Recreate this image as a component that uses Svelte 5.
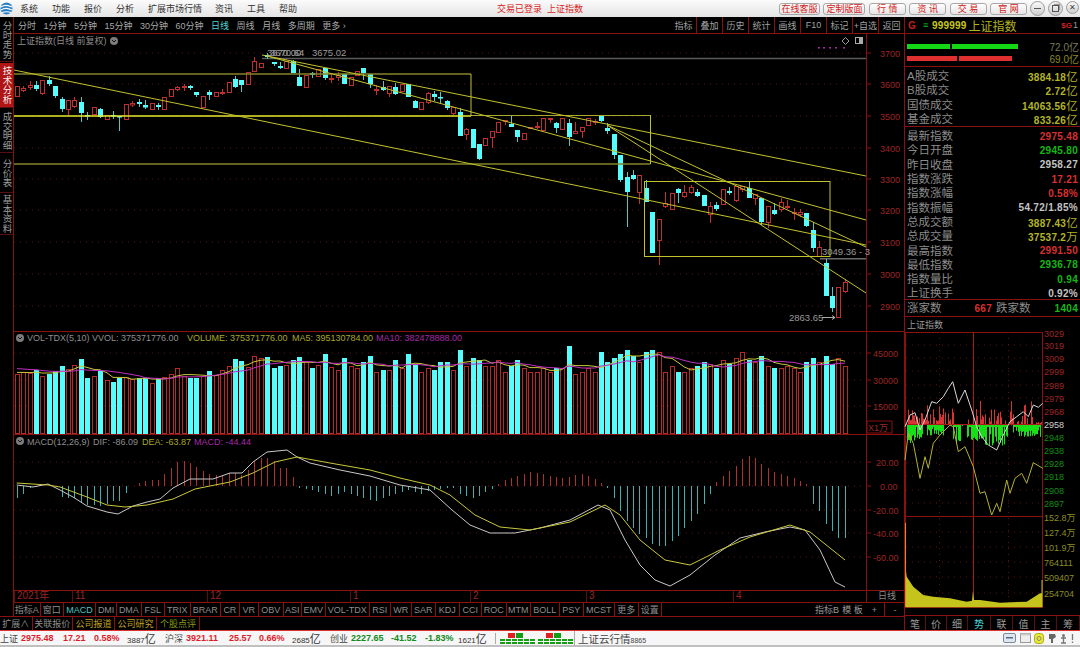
<script>
  const menu = [['系统',18],['功能',18],['报价',18],['分析',18],['扩展市场行情',53],['资讯',18],['工具',18],['帮助',18]];
  const webBtns = [['在线客服',41],['定制版面',42],['行 情',37],['资 讯',37],['交 易',37],['官 网',37]];
  const periods = ['分时','1分钟','5分钟','15分钟','30分钟','60分钟','日线','周线','月线','多周期','更多 ›'];
  const tools = ['指标','叠加','历史','统计','画线','F10','标记','+自选','返回'];
  const railTabs = [['分时走势',44,false],['技术分析',45,true],['成交明细',44,false],['分价表',39,false],['基本资料',41,false]];

  // [isRed, bodyTop, bodyBottom, high, low] in page pixels
  const candles = [
    [1,86,96,86,96],[1,88,90,86,92],[1,85,87,81,90],[0,85,89,81,91],[1,80,93,80,95],[0,80,84,76,86],[0,86,96,86,98],[0,99,109,97,112],[1,100,109,100,115],[1,100,106,97,108],
    [0,102,113,97,122],[0,115,116,112,120],[1,107,114,107,114],[0,109,117,108,118],[1,115,119,115,119],[0,115,116,111,119],[0,116,117,116,131],[1,104,119,104,119],[1,103,104.5,101,107],[0,102,104,99,107],
    [0,105,107.5,100,109],[1,103,109,103,109],[0,105,107,103,110],[1,97,109,97,109],[1,89,96,89,96],[1,87,89,86,91],[1,86,87,84,91],[0,86,88,85,90],[0,92,95,92,97],[1,96,107,96,107],
    [0,92,95,90,100],[1,92,96,92,96],[1,92,92.5,89,95],[1,82,92,82,92],[0,79,87,76,88],[0,80,85,80,92],[1,72,84,72,84],[1,61,71,57,71],[1,63,67,63,67],[0,55,57,53,59],
    [0,62,64,62,66],[0,66,68,62,69],[1,61,68,61,68],[0,61,73,60,73],[0,77,86,69,86],[1,75,87,75,87],[0,73,75,72,78],[1,69,76,69,76],[0,68,78,68,80],[1,78,79,74,83],
    [1,75,77,72,81],[0,74,84,74,84],[1,77,85,77,85],[1,71,75,71,75],[0,68,73,68,80],[0,74,84,74,88],[1,89,90,85,95],[0,87,90,81,91],[1,86,93,86,97],[0,87,94,83,95],
    [1,84,91,84,91],[0,84,97,84,97],[0,101,108,100,108],[1,102,109,102,109],[1,93,102,92,104],[0,94,97,91,101],[0,97,98,92,103],[0,101,108,100,110],[1,107,113,107,115],[0,112,136,108,136],
    [1,129,134,128,140],[0,129,148,129,148],[0,144,159,144,160],[1,138,145,138,145],[1,131,137,131,148],[1,122,132,122,132],[1,120,121,120,125],[0,124,127,115,127],[0,130,137,130,142],[1,133,139,133,139],
    [1,127,128,127,129],[1,126,127,122,129],[1,118,130,118,130],[1,118,119,118,123],[0,123,128,122,133],[1,118,129,118,129],[0,123,137,119,146],[1,131,133,122,133],[1,127,131,127,138],[1,118,125,118,125],
    [1,121,122,119,125],[0,116,121,115,122],[0,128,131,123,134],[0,134,155,134,159],[0,155,180,155,182],[0,177,192,172,227],[0,175,179,170,180],[1,175,192,175,204],[0,188,202,180,202],[0,212,253,212,253],
    [1,219,240,219,265],[1,203,206,192,208],[1,193,209,193,209],[0,189,193,188,203],[1,192,196,185,198],[1,187,192,185,194],[0,192,196,189,197],[0,195,206,195,206],[1,206,214,202,223],[0,205,209,202,211],
    [1,189,204,189,204],[0,191,193,187,195],[1,186,200,186,202],[1,186,189,186,192],[0,188,198,182,198],[1,194,198,194,205],[0,198,222,198,225],[1,206,222,206,228],[0,210,214,203,215],[1,202,209,198,212],
    [1,206,207,200,209],[1,212,213,208,220],[1,212,214,209,217],[0,213,226,213,227],[0,230,248,222,252],[1,247,256,241,256],[0,263,296,259,296],[0,296,308,287,312],[1,287,317,287,317],[1,282,291,279,293]
  ];
  const cx = i => Math.round(16.7 + 6.42 * i);

  const volTops = [374,372,373,370,376,374,371,366,369,365,359,378,376,371,380,382,378,377,379,378,378,383,378,377,374,368,376,378,378,376,371,375,370,366,359,361,367,356,358,357,368,366,365,360,357,
    362,368,365,354,367,370,358,366,368,362,356,372,370,370,360,368,354,364,372,368,370,362,362,370,350,366,358,360,366,366,360,372,366,360,368,372,372,368,372,368,368,346,374,372,368,372,352,362,358,354,350,356,362,352,350,352,372,366,372,372,368,366,362,364,368,360,364,358,352,360,362,356,366,368,368,366,368,372,362,358,362,356,364,358,366];
  const maPath = n => volTops.map((_, i) => {
    let s = 0, k = 0;
    for (let j = Math.max(0, i - n + 1); j <= i; j++) { s += volTops[j]; k++; }
    const pad = n - k;
    return `${i ? 'L' : 'M'}${cx(i)} ${((s + pad * (n === 10 ? 368 : 372)) / n).toFixed(1)}`;
  }).join('');

  const hist = [-12,-8,-2,-1,0,0,0,-11,-12,-12,-17,-19,-19,-20,-18,-15,-15,-7,0,3,5,6,6,12,18,24,25,23,19,15,12,11,10,13,13,11,16,25,28,28,25,18,18,9,-2,
    -3,-4,-6,-8,-10,-8,-6,-8,-10,-12,-14,-15,-12,-10,-8,-6,-4,-6,-8,-5,-4,-3,-2,-2,-8,-10,-12,-10,-6,-3,2,6,8,10,12,14,13,12,10,9,8,9,11,12,10,7,3,-2,
    -12,-25,-35,-42,-48,-52,-58,-60,-60,-55,-50,-42,-35,-28,-18,-8,4,10,15,20,27,30,28,22,18,14,12,10,8,5,2,-18,-25,-38,-45,-52,-52];
  const dif = '16.7,485 33,487 48,484 60,490 73,497 87,506 107,512 118,514 133,506 147,502 160,499 173,488 190,479 213,479 230,473 242,473 253,462 267,452 287,450 297,457 310,463 340,470 370,476 400,485 430,490 452,510 470,525 490,533 515,533 540,528 570,520 598,505 610,510 625,540 640,565 655,580 670,586 690,575 715,555 740,538 765,532 790,527 805,530 820,550 835,582 845,587';
  const dea = '16.7,483 48,485 60,487 87,497 107,505 125,507 147,505 173,499 195,489 230,482 253,473 275,462 297,457 330,463 370,470 400,478 430,485 450,495 475,515 500,527 530,530 570,522 605,505 620,515 640,540 665,560 690,565 720,550 750,537 790,525 810,532 845,560';

  const priceAxis = [[3700,53],[3600,84],[3500,116],[3400,148],[3300,179],[3200,210],[3100,242],[3000,274],[2900,306]];
  const volAxis = [[45000,353],[30000,380],[15000,406]];
  const macdAxis = [['20.00',462],['0.00',486],['-20.00',510],['-40.00',533],['-60.00',557]];
  const diagonals = [[14,70,866,245],[262,55,866,176],[267,56,866,220],[607,125,866,247],[607,125,866,293]];

  const dates = [['2021年',58],['11',135],['12',143],['1',120],['2',116],['3',147],['4',133]];
  const indicators = [['指标A',26.7],['窗口',23],['MACD',32.7,true],['DMI',20.5],['DMA',25],['FSL',23],['TRIX',26],['BRAR',30],['CR',19],['VR',19],['OBV',25],['ASI',18],['EMV',24],['VOL-TDX',44],['RSI',20.7],['WR',21.3],['SAR',24],['KDJ',24],['CCI',22],['ROC',25],['MTM',24],['BOLL',29],['PSY',24],['MCST',31],['更多',23.7],['设置',23.3]];
  const extTabs = [['扩展∧',32.5,''],['关联报价',40.5,''],['公司报道',42,'y'],['公司研究',42,'y'],['个股点评',43,'o']];

  const quotes = [['A股成交','3884.18','亿'],['B股成交','2.72','亿'],['国债成交','14063.56','亿'],['基金成交','833.26','亿']];
  const stats = [['最新指数','2975.48','r'],['今日开盘','2945.80','g'],['昨日收盘','2958.27','w'],['指数涨跌','17.21','r'],['指数涨幅','0.58%','r'],['指数振幅','54.72/1.85%','w'],['总成交额','3887.43','o','亿'],['总成交量','37537.2','o','万'],['最高指数','2991.50','r'],['最低指数','2936.78','g'],['指数量比','0.94','g'],['上证换手','0.92%','w']];
  const sideTabs = [['笔',21],['价',21],['细',21],['势',23],['联',22],['值',22],['主',22],['筹',23]];

  const intraAxis = [['3029',333,'r'],['3019',345,'r'],['3009',358,'r'],['2999',371,'r'],['2989',385,'r'],['2979',398,'r'],['2968',411,'r'],['2958',424,'w'],['2948',437,'g'],['2938',450,'g'],['2928',463,'g'],['2918',476,'g'],['2908',490,'g'],['2897',503,'g'],['152.8万',517,'o'],['127.4万',532,'o'],['101.9万',547,'o'],['764111',562,'o'],['509407',577,'o'],['254704',593,'o']];
  const z = s => s.trim().split(/\s+/).map(p => { const [a, b] = p.split(','); return `${(900 + a / 3).toFixed(1)},${(320 + b / 3).toFixed(1)}`; }).join(' ');
  const whiteLine = z('15,320 30,285 45,278 60,330 75,300 95,245 110,250 130,230 145,205 158,185 175,250 195,210 215,270 230,320 245,350 265,375 290,390 310,345 330,305 350,290 370,275 385,290 400,255 415,262 428,250');
  const yellowLine = z('15,420 25,340 40,370 60,475 75,410 85,445 100,370 120,345 150,315 160,320 175,395 195,380 220,440 240,520 255,515 275,585 290,550 300,575 320,480 330,520 345,475 365,460 380,490 400,428 428,445');
  const volArea = z('17,745 20,770 40,800 70,825 100,830 150,835 200,845 216,842 219,812 222,840 240,840 300,848 380,845 420,820 426,820 426,862 17,862');

  let seed = 7;
  const rnd = () => { seed = (seed * 16807) % 2147483647; return seed / 2147483647; };
  // Money-flow bars: zones of buying (red) and selling (green) over the session.
  const greenZones = [[907,922,7,20],[927,943,5,12],[953,960,15,20],[967,982,10,17],[983,1007,10,22],[1013,1040,5,14]];
  const redEnv = x => {
    if (x < 955) return rnd() < .3 ? 0 : 3 + 20 * rnd() * rnd();
    if (x < 975) return rnd() < .85 ? 0 : 4 + 6 * rnd();
    if (x < 1036) return rnd() < .55 ? 0 : 2 + 28 * rnd() * rnd();
    return 3 * rnd();
  };
  const greenEnv = x => {
    const zone = greenZones.find(([a, b]) => x >= a && x <= b);
    if (!zone) return rnd() < .5 ? 0 : 2 * rnd();
    return rnd() < .15 ? 3 : zone[2] + (zone[3] - zone[2]) * rnd();
  };
  const flowBars = [];
  for (let x = 906; x < 1042; x++) {
    flowBars.push({ x, up: redEnv(x), down: greenEnv(x) });
  }

  const status = [
    ['上证','n',21],['2975.48','r',42],['17.21','r',31],['0.58%','r',33],['3887','k',38,'亿'],
    ['沪深','n',21],['3921.11','r',43],['25.57','r',30],['0.66%','r',33],['2685','k',38,'亿'],
    ['创业','n',21],['2227.65','g',40],['-41.52','g',34],['-1.83%','g',33],['1621','k',37,'亿']
  ];
  const dashes = Array.from({ length: 6 });
</script>

<div class="app">
  <header class="titlebar">
    <svg class="logo" width="13" height="13" viewBox="0 0 13 13">
      <circle cx="6.5" cy="6.5" r="6" fill="#2a7fc4"/>
      <path d="M1 5c3-2 7-2 11 0M1 8c3-2 7-2 11 0M2 10.5c3-1 6-1 9 0" stroke="#fff" stroke-width="1.1" fill="none"/>
    </svg>
    <nav class="menu">
      {#each menu as [m, w]}<span style="width:{w}px">{m}</span>{/each}
    </nav>
    <div class="login">交易已登录&nbsp;&nbsp;上证指数</div>
    <div class="webbtns">
      {#each webBtns as [b, w]}<span style="width:{w}px">{b}</span>{/each}
    </div>
    <div class="winbtns">
      <span class="wb"><i class="min"></i></span>
      <span class="wb"><i class="rest"></i></span>
      <span class="wb x">✕</span>
    </div>
  </header>

  <div class="workspace">
    <div class="leftarea">
      <div class="upper">
        <aside class="rail">
          {#each railTabs as [t, h, on]}
            <div class="railtab" class:on style="height:{h}px">{t}</div>
          {/each}
        </aside>
        <main class="main">
          <div class="toolbar">
            <div class="periods">
              {#each periods as p}<span class:active={p === '日线'}>{p}</span>{/each}
            </div>
            <div class="tools">
              {#each tools as t}<span>{t}</span>{/each}
            </div>
          </div>

          <svg class="pane" width="891" height="297" viewBox="14 34 891 297">
            {#each priceAxis as [v, y]}
              <line x1="14" x2="866" y1={y} y2={y} class="dots"/>
              <line x1="866" x2="871" y1={y} y2={y} class="axisline"/>
              <text x="880" y={y + 3.5} class="t axis">{v}</text>
            {/each}
            <line x1="866.5" x2="866.5" y1="34" y2="331" class="axisline"/>
            <line x1="262" x2="866" y1="58.5" y2="58.5" stroke="#5a5a5a" stroke-width="1.5"/>
            <line x1="820" x2="866" y1="258.7" y2="258.7" stroke="#6a6a6a" stroke-width="1.5"/>

            {#each candles as [red, top, bot, hi, lo], i}
              <line x1={cx(i) + .5} x2={cx(i) + .5} y1={hi} y2={lo} stroke={red ? '#c03030' : '#4fc8c8'}/>
              {#if red}
                <rect x={cx(i) - 1.5} y={top + .5} width="4" height={Math.max(bot - top, 1)} fill="#000" stroke="#c03030"/>
              {:else}
                <rect x={cx(i) - 2} y={top} width="5" height={Math.max(bot - top, 1.5)} fill="#56fdfd"/>
              {/if}
            {/each}

            <line x1="14" x2="471" y1="74" y2="74" stroke="#85852a" stroke-width="1.6"/>
            <line x1="14" x2="471" y1="116" y2="116" stroke="#e8e82c" stroke-width="1.6"/>
            <line x1="471" x2="650.5" y1="115.5" y2="115.5" stroke="#a8a82c" stroke-width="1.2"/>
            <line x1="14" x2="650.5" y1="164" y2="164" stroke="#85852a" stroke-width="1.4"/>
            <line x1="471" x2="471" y1="74" y2="116" class="draw"/>
            <line x1="650.5" x2="650.5" y1="115" y2="164" class="draw"/>
            <rect x="644.5" y="181.5" width="185.5" height="75" class="draw" fill="none"/>
            {#each diagonals as [x1, y1, x2, y2]}
              <line {x1} {y1} {x2} {y2} class="draw"/>
            {/each}

            <text x="17" y="44" class="t head">上证指数(日线 前复权)</text>
            <circle cx="114" cy="41" r="4" fill="#7c7c7c"/>
            <path d="M112 40l2 2 2-2" stroke="#111" fill="none"/>

            <text x="267" y="56" class="t note">3670.00</text>
            <text x="270" y="56" class="t note">3670.64</text>
            <text x="312" y="56" class="t note">3675.02</text>
            <text x="822" y="255" class="t note">3049.36 - 3</text>
            <text x="789" y="321" class="t note">2863.65</text>
            <path d="M822 317.5h13m-3-2l3 2-3 2" stroke="#aaa" fill="none"/>

            {#each [818,823,829,835,843] as x}<rect x={x} y="47" width="2" height="1.6" fill="#a02aa0"/>{/each}
            <path d="M845.5 37.5l3.5 3.5-3.5 3.5-3.5-3.5z" stroke="#999" fill="none"/>
            <rect x="855.5" y="37.5" width="7" height="6" stroke="#aaa" fill="none"/>
            <rect x="859" y="38" width="3" height="5" fill="#aaa"/>
          </svg>

          <svg class="pane" width="891" height="103" viewBox="14 331 891 103">
            <line x1="14" x2="905" y1="331.5" y2="331.5" class="axisline"/>
            <line x1="14" x2="866" y1="353" y2="353" class="dots"/>
            <line x1="14" x2="866" y1="380" y2="380" class="dots"/>
            <line x1="14" x2="866" y1="406" y2="406" class="dots"/>
            <line x1="866.5" x2="866.5" y1="331" y2="434" class="axisline"/>
            {#each volAxis as [v, y]}
              <line x1="866" x2="871" y1={y} y2={y} class="axisline"/>
              <text x="873" y={y + 3.5} class="t axis">{v}</text>
            {/each}
            <text x="868" y="431" class="t axis">X1万</text>
            <rect x="867" y="421" width="25" height="12" class="axisline" fill="none"/>
            {#each volTops as top, i}
              {#if candles[i][0]}
                <rect x={cx(i) - 1.5} y={top + .5} width="4" height={433 - top} fill="#000" stroke="#b82a2a"/>
              {:else}
                <rect x={cx(i) - 2} y={top} width="5" height={434 - top} fill="#56fdfd"/>
              {/if}
            {/each}
            <path d={maPath(5)} stroke="#c8c83a" fill="none"/>
            <path d={maPath(10)} stroke="#c030c0" fill="none"/>
            <circle cx="20" cy="338" r="4" fill="#7c7c7c"/>
            <path d="M18 337l2 2 2-2" stroke="#111" fill="none"/>
            <text x="27" y="341" class="t gray">VOL-TDX(5,10)</text>
            <text x="92" y="341" class="t gray">VVOL: 375371776.00</text>
            <text x="187" y="341" class="t olive">VOLUME: 375371776.00</text>
            <text x="292" y="341" class="t olive">MA5: 395130784.00</text>
            <text x="376" y="341" class="t mag">MA10: 382478888.00</text>
          </svg>

          <svg class="pane" width="891" height="156" viewBox="14 434 891 156">
            <line x1="14" x2="905" y1="434.5" y2="434.5" class="axisline"/>
            {#each macdAxis as [v, y]}
              <line x1="14" x2="866" y1={y} y2={y} class="dots"/>
              <line x1="866" x2="871" y1={y} y2={y} class="axisline"/>
              <text x={v === '0.00' ? 880 : v === '20.00' ? 876 : 873} y={y + 3.5} class="t axis">{v}</text>
            {/each}
            <line x1="866.5" x2="866.5" y1="434" y2="590" class="axisline"/>
            {#each hist as h, i}
              {#if h}
                <line x1={cx(i) + .5} x2={cx(i) + .5} y1="486" y2={486 - h} stroke={h > 0 ? '#b03030' : '#3fb0b0'}/>
              {/if}
            {/each}
            <polyline points={dif} fill="none" stroke="#c8c8c8"/>
            <polyline points={dea} fill="none" stroke="#c8c83a"/>
            <circle cx="20" cy="441" r="4" fill="#7c7c7c"/>
            <path d="M18 440l2 2 2-2" stroke="#111" fill="none"/>
            <text x="27" y="444.5" class="t gray">MACD(12,26,9)</text>
            <text x="93" y="444.5" class="t gray">DIF: -86.09</text>
            <text x="142" y="444.5" class="t olive">DEA: -63.87</text>
            <text x="194" y="444.5" class="t mag">MACD: -44.44</text>
          </svg>

          <div class="dates">
            {#each dates as [d, w]}<span style="width:{w}px">{d}</span>{/each}
            <span class="period">日线</span>
          </div>
          <div class="indicators">
            {#each indicators as [t, w, on]}<span class:on style="width:{w}px">{t}</span>{/each}
            <b class="fill"></b>
            <span class="plain" style="width:26px">指标B</span>
            <span class="plain" style="width:25px">模 板</span>
            <span style="width:20px">+</span>
            <span class="last" style="width:20px">-</span>
          </div>
        </main>
      </div>
      <div class="ext">
        {#each extTabs as [t, w, c]}<span class={c} style="width:{w}px">{t}</span>{/each}
      </div>
    </div>

    <aside class="side">
      <div class="code">
        <span class="g">G</span><span class="eq">≡</span><b>999999</b><span class="name">上证指数</span>
        <span class="sg"><em>$G</em>1</span>
      </div>
      <div class="bars">
        <div class="barrow">
          <div class="track"><i class="gr" style="width:43px"></i><i class="gr" style="width:66px"></i></div>
          <span class="amt gray2">72.0亿</span>
        </div>
        <div class="barrow">
          <div class="track"><i class="rd" style="width:50px"></i><i class="rd" style="width:53px"></i></div>
          <span class="amt olive2">69.0亿</span>
        </div>
      </div>
      <div class="sec">
        {#each quotes as [l, v, u]}
          <div class="row"><span class="lab">{l}</span><span class="val o">{v}<small>{u}</small></span></div>
        {/each}
      </div>
      <div class="sec tall">
        {#each stats as [l, v, c, u]}
          <div class="row"><span class="lab">{l}</span><span class="val {c}">{v}{#if u}<small>{u}</small>{/if}</span></div>
        {/each}
      </div>
      <div class="updown">
        <span class="lab">涨家数</span><span class="val r">667</span>
        <span class="lab two">跌家数</span><span class="val g end">1404</span>
      </div>
      <div class="sname">上证指数</div>
      <svg class="intra" width="175" height="283" viewBox="905 332 175 283">
        <line x1="905" x2="1043" y1="332.5" y2="332.5" class="axisline"/>
        <line x1="905.5" x2="905.5" y1="332" y2="607" class="axisline"/>
        <line x1="1042.5" x2="1042.5" y1="332" y2="607" class="axisline"/>
        <line x1="973.5" x2="973.5" y1="332" y2="607" stroke="#a81818"/>
        {#each [345,358,371,385,398,411,437,450,463,476,490,503] as y}
          <line x1="906" x2="1042" y1={y} y2={y} class="dots"/>
        {/each}
        {#each [532,547,562,577,593] as y}
          <line x1="906" x2="1042" y1={y} y2={y} class="dots"/>
        {/each}
        <line x1="939.5" x2="939.5" y1="332" y2="607" class="dots"/>
        <line x1="1008.5" x2="1008.5" y1="332" y2="607" class="dots"/>
        <line x1="905" x2="1043" y1="516.5" y2="516.5" class="axisline"/>
        <line x1="905" x2="1043" y1="607.5" y2="607.5" class="axisline"/>
        {#each flowBars as b}
          {#if b.up}<line x1={b.x + .5} x2={b.x + .5} y1="424" y2={424 - b.up} stroke="#d83434"/>{/if}
          {#if b.down}<line x1={b.x + .5} x2={b.x + .5} y1="424" y2={424 + b.down} stroke="#18e018"/>{/if}
        {/each}
        <line x1="905" x2="1043" y1="424.5" y2="424.5" stroke="#a81818"/>
        <polyline points={yellowLine} fill="none" stroke="#b4b42c"/>
        <polyline points={whiteLine} fill="none" stroke="#d8d8d8"/>
        <polygon points={volArea} fill="#c4c41c"/>
        <line x1="905.5" x2="905.5" y1="523" y2="607" stroke="#e08a20"/>
        <line x1="1042" x2="1042" y1="580" y2="607" stroke="#c4c41c"/>
        {#each intraAxis as [v, y, c]}
          <text x="1044" y={y + 3.5} class="t ax{c}">{v}</text>
        {/each}
      </svg>
      <div class="sidetabs">
        {#each sideTabs as [t, w]}<span class:on={t === '势'} style="width:{w}px">{t}</span>{/each}
      </div>
    </aside>
  </div>

  <footer class="statusbar">
    {#each status as [t, c, w, u]}
      <span class="s {c}" style="width:{w}px">{t}{#if u}<small>{u}</small>{/if}</span>
    {/each}
    <div class="mini first">
      <div class="miniTop"><i class="r"></i><i class="gg"></i></div>
      {#each [0, 1] as _}<div class="dash">{#each dashes as __}<i></i>{/each}</div>{/each}
    </div>
    <div class="mini">
      <div class="miniTop"><i class="r"></i><i class="gg"></i></div>
      {#each [0, 1] as _}<div class="dash">{#each dashes as __}<i></i>{/each}</div>{/each}
    </div>
    <span class="cloud">上证云行情<small>8865</small></span>
    <div class="tray">
      <svg width="13" height="10" viewBox="0 0 13 10"><rect x=".5" y=".5" width="12" height="9" rx="1.5" fill="#dfe6ee" stroke="#7a8aa0"/><rect x="3" y="4" width="7" height="1.5" fill="#506a90"/></svg>
      <svg width="11" height="10" viewBox="0 0 11 10"><rect x=".5" y=".5" width="10" height="9" fill="#eee" stroke="#999"/><rect x=".5" y=".5" width="10" height="2" fill="#ccc"/></svg>
      <svg width="10" height="11" viewBox="0 0 10 11"><rect x=".5" y=".5" width="9" height="10" rx="3" fill="#eaea30" stroke="#a8a820"/><circle cx="5" cy="5.5" r="2" fill="none" stroke="#888"/></svg>
      <svg width="9" height="11" viewBox="0 0 9 11"><path d="M1 1h6l1 3-3 2v4H3V6H1z" fill="#666"/></svg>
      <svg width="7" height="11" viewBox="0 0 7 11"><circle cx="3.500" cy="2.500" r="1.500" fill="#777"/><path d="M1 5h5M3.500 4v6M1 10h5" stroke="#777" stroke-width="1.300"/></svg>
      <svg width="3" height="11" viewBox="0 0 3 11"><path d="M1.500 1v6M1.500 8.500v1.500" stroke="#777" stroke-width="1.300"/></svg>
    </div>
  </footer>
</div>

<style>
  :global(body) { margin: 0; background: #000; }
  .app {
    width: 1080px; height: 647px; overflow: hidden; background: #000;
    display: grid; grid-template-rows: 17px 613px 17px;
    font-family: "Liberation Sans", "Noto Sans CJK SC", sans-serif;
    font-size: 9px; color: #a8a8a8;
  }
  span, b, em, small { white-space: nowrap; }

  /* title bar */
  .titlebar { display: flex; align-items: center; background: linear-gradient(#fbfbfb, #e4e4e4); color: #333; }
  .logo { margin-left: 0; flex: none; }
  .menu { display: flex; gap: 14px; margin-left: 7px; width: 477px; }
  .menu span { display: block; }
  .login { color: #d81e1e; width: 282px; }
  .webbtns { display: flex; gap: 3.4px; height: 12px; }
  .webbtns span {
    display: flex; align-items: center; justify-content: center; box-sizing: border-box;
    border: 1px solid #a8a8a8; border-radius: 3px; color: #d02020; background: linear-gradient(#fff, #e4e4e4);
  }
  .winbtns { display: flex; gap: 3px; margin-left: 3px; }
  .wb {
    box-sizing: border-box; width: 15px; height: 15px; border-radius: 50%; border: 1px solid #999;
    background: linear-gradient(#fafafa, #cfcfcf); display: flex; align-items: center; justify-content: center;
    color: #444; font-size: 8px;
  }
  .wb.x { width: 13px; height: 13px; }
  .wb i { display: block; }
  .wb .min { width: 7px; height: 1.5px; background: #555; }
  .wb .rest { width: 5px; height: 5px; border: 1px solid #555; box-shadow: 1.500px -1.500px 0 -0.300px #999; }

  /* layout */
  .workspace { display: grid; grid-template-columns: 905px 175px; min-height: 0; }
  .leftarea { display: flex; flex-direction: column; min-height: 0; }
  .upper { display: flex; height: 599px; }
  .rail { width: 13px; flex: none; border-right: 1px solid #8a1111; display: flex; flex-direction: column; gap: 1px; padding-top: 1px; }
  .railtab {
    writing-mode: vertical-rl; text-orientation: upright; display: flex; align-items: center; justify-content: center;
    font-size: 9.5px; white-space: nowrap; color: #9c9c9c; width: 13px; border-bottom: 1px solid #5a1010; box-sizing: border-box;
  }
  .railtab.on { background: #b01414; color: #f0f0f0; }
  .main { width: 891px; display: flex; flex-direction: column; }
  .pane, .intra { display: block; flex: none; overflow: visible; }

  .toolbar { height: 17px; box-sizing: border-box; border-bottom: 1px solid #8a1111; display: flex; justify-content: space-between; }
  .periods { display: flex; gap: 7.500px; padding-left: 4px; align-items: center; }
  .periods .active { color: #4fd8d8; }
  .tools { display: flex; }
  .tools span { width: 26px; box-sizing: border-box; border-right: 1px solid #8a1111; display: flex; align-items: center; justify-content: center; color: #a0a0a0; }

  /* svg text */
  .t { font-family: "Liberation Sans", "Noto Sans CJK SC", sans-serif; font-size: 9px; }
  .axis, .axr { fill: #9c2626; }
  .axw { fill: #d0d0d0; }
  .axg { fill: #128c12; }
  .axo { fill: #8c8c20; }
  .head, .gray { fill: #8e8e8e; }
  .note { fill: #9a9a9a; font-size: 9.5px; }
  .olive { fill: #a8a826; }
  .mag { fill: #a828a8; }
  .dots { stroke: #5a1212; stroke-dasharray: 1 5; fill: none; }
  .axisline { stroke: #8a1111; }
  .draw { stroke: #c2c22c; }

  /* rows beneath the charts */
  .dates { height: 12px; box-sizing: border-box; display: flex; border-top: 1px solid #8a1111; color: #9a2424; align-items: center; font-size: 10px; }
  .dates span { box-sizing: border-box; padding-left: 2px; border-left: 1px solid #5a1010; height: 100%; line-height: 10px; }
  .dates .period { width: 39px; text-align: center; color: #8a8a8a; font-size: 9px; border-left: 1px solid #8a1111; }
  .indicators { height: 14px; box-sizing: border-box; display: flex; border-top: 1px solid #8a1111; }
  .indicators span { box-sizing: border-box; border-right: 1px solid #8a1111; display: flex; align-items: center; justify-content: center; color: #8e8e8e; }
  .indicators .on { color: #46c4c4; }
  .indicators .plain { border-right: 0; color: #9a9a9a; }
  .indicators .last { border-right: 0; }
  .indicators .fill { flex: 1; }
  .ext { height: 14px; box-sizing: border-box; display: flex; border-top: 1px solid #8a1111; }
  .ext span { box-sizing: border-box; border-right: 1px solid #8a1111; display: flex; align-items: center; justify-content: center; color: #8e8e8e; }
  .ext .y { color: #c0a020; }
  .ext .o { color: #8a9a10; }

  /* side panel */
  .side { border-left: 1px solid #8a1111; box-sizing: border-box; display: flex; flex-direction: column; margin-left: -1px; width: 176px; }
  .code { height: 17px; box-sizing: border-box; border-bottom: 1px solid #8a1111; display: flex; align-items: center; padding-left: 3px; color: #b4b41e; }
  .code .g { color: #c02020; font-weight: 700; font-size: 10px; width: 15px; }
  .code .eq { color: #18c018; width: 9px; font-size: 9px; }
  .code b { font-size: 10px; color: #c8c818; letter-spacing: .2px; }
  .code .name { font-size: 12px; margin-left: 2px; }
  .code .sg { margin-left: auto; margin-right: 2px; color: #999; }
  .code em { font-style: normal; font-weight: 700; color: #d02020; font-size: 8px; margin-right: 1px; }
  .bars { height: 33px; box-sizing: border-box; border-bottom: 1px solid #8a1111; padding: 7px 1px 0 2px; display: flex; flex-direction: column; gap: 1px; }
  .barrow { display: flex; justify-content: space-between; align-items: center; height: 11px; }
  .track { display: flex; gap: 2px; }
  .track i { display: block; height: 5px; }
  .gr { background: #14d814; }
  .rd { background: #e03030; }
  .amt { font-size: 10px; }
  .gray2 { color: #7a7a58; }
  .olive2 { color: #8a8a20; }
  .sec { height: 60px; box-sizing: border-box; border-bottom: 1px solid #8a1111; padding: 2px 2px 0 2px; }
  .sec.tall { height: 173px; padding-top: 2px; }
  .row { height: 14.300px; display: flex; justify-content: space-between; align-items: center; }
  .lab { font-size: 11.500px; color: #8c8c8c; line-height: 14px; }
  .val { font-size: 10px; font-weight: 700; letter-spacing: .3px; }
  .val small { font-size: 11.500px; font-weight: 400; }
  .r { color: #d83030; }
  .g { color: #14b814; }
  .w { color: #c4c4c4; }
  .o { color: #b4b428; }
  .updown { height: 17px; box-sizing: border-box; border-bottom: 1px solid #8a1111; display: flex; align-items: center; padding: 0 2px; }
  .updown .val.r { margin-left: 33px; }
  .updown .two { margin-left: 4px; }
  .updown .end { margin-left: auto; }
  .sname { height: 15px; flex: none; display: flex; align-items: center; padding-left: 2px; color: #9a9a9a; }
  .sidetabs { height: 15px; flex: none; display: flex; box-sizing: border-box; border-top: 1px solid #8a1111; }
  .sidetabs span { box-sizing: border-box; border-right: 1px solid #5a1010; display: flex; align-items: center; justify-content: center; color: #9a9a9a; font-size: 10px; }
  .sidetabs .on { color: #46d0d0; }

  /* status bar */
  .statusbar {
    background: #f6f6f6; border-top: 1px solid #e03030; box-sizing: border-box; display: flex; align-items: center;
    color: #222; border-bottom: 2px solid #c0c0c0; font-size: 9px;
  }
  .s { display: block; flex: none; }
  .s.n { color: #444; font-size: 9px; }
  .s.r { color: #e01c2c; font-weight: 700; }
  .s.g { color: #118a20; font-weight: 700; }
  .s.k { color: #333; font-size: 8px; }
  .s small { font-size: 11px; }
  .mini { width: 35px; box-sizing: content-box; display: flex; flex-direction: column; gap: 1px; margin-left: 3px; flex: none; }
  .mini.first { border-left: 1px solid #aaa; padding-left: 4px; margin-left: 0; }
  .miniTop { display: flex; height: 5px; padding-left: 8px; gap: 1px; }
  .miniTop i { display: block; width: 7px; height: 5px; }
  .miniTop .r { background: #e02020; }
  .miniTop .gg { background: #12a012; }
  .dash { display: flex; gap: 1px; }
  .dash i { display: block; width: 5px; height: 2px; background: #12a012; }
  .cloud { margin-left: 1px; padding-left: 3px; border-left: 1px solid #aaa; color: #444; font-size: 10.500px; }
  .cloud small { font-size: 7px; }
  .tray { margin-left: auto; display: flex; align-items: center; gap: 3.600px; padding-right: 6px; }
</style>
